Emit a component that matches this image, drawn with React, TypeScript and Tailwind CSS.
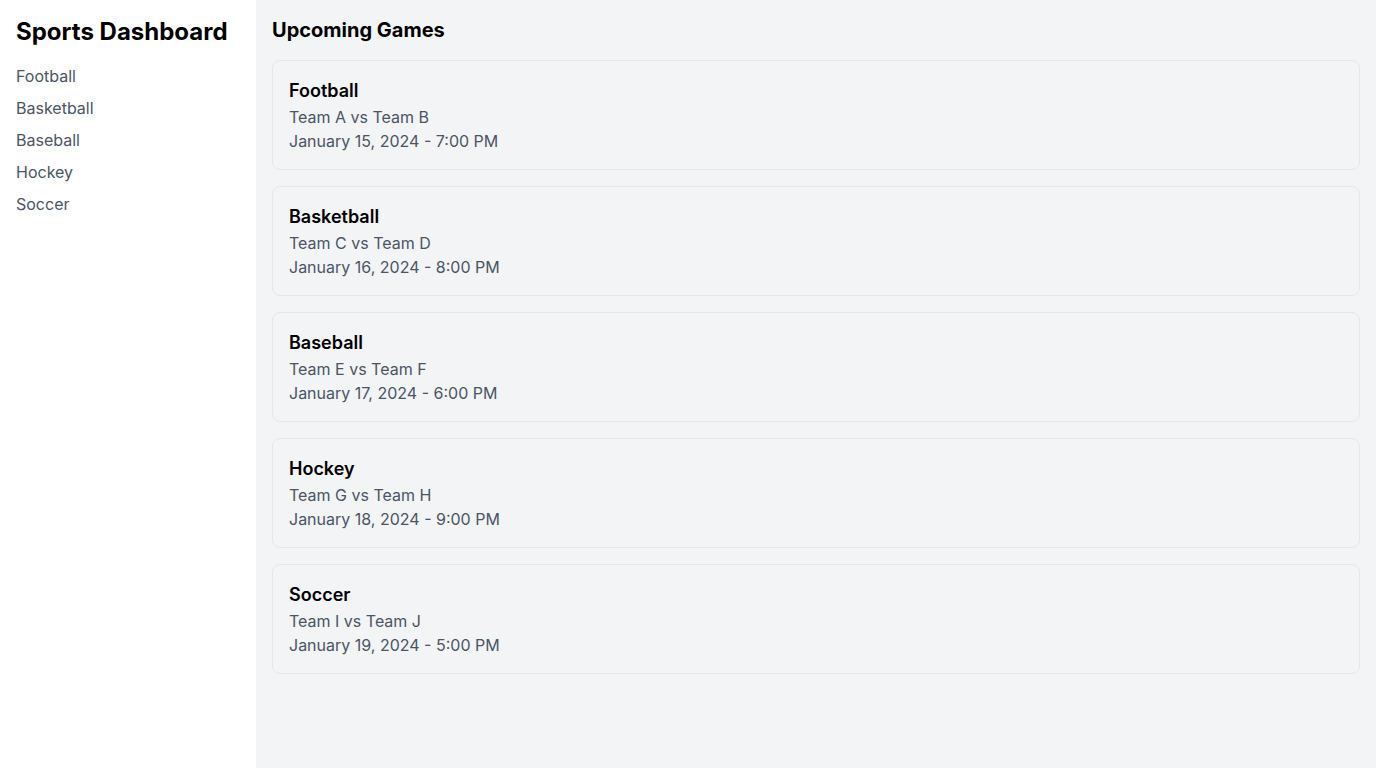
import React from "react";

const sports = ["Football", "Basketball", "Baseball", "Hockey", "Soccer"];
const games = [
  { sport: "Football", teams: "Team A vs Team B", date: "January 15, 2024 - 7:00 PM" },
  { sport: "Basketball", teams: "Team C vs Team D", date: "January 16, 2024 - 8:00 PM" },
  { sport: "Baseball", teams: "Team E vs Team F", date: "January 17, 2024 - 6:00 PM" },
  { sport: "Hockey", teams: "Team G vs Team H", date: "January 18, 2024 - 9:00 PM" },
  { sport: "Soccer", teams: "Team I vs Team J", date: "January 19, 2024 - 5:00 PM" },
];

export default function App() {
  return (
    <div className="flex min-h-screen h-[768px] font-['Inter',sans-serif] text-black">
      <aside className="w-64 shrink-0 bg-white p-4">
        <h1 className="text-2xl font-bold">Sports Dashboard</h1>
        <nav className="mt-4 flex flex-col gap-2">
          {sports.map((s) => (
            <a key={s} className="text-base text-gray-600">{s}</a>
          ))}
        </nav>
      </aside>
      <main className="flex-1 bg-gray-100 p-4">
        <h2 className="mb-4 text-xl font-bold">Upcoming Games</h2>
        <div className="flex flex-col gap-4">
          {games.map((g) => (
            <div key={g.sport} className="rounded-lg border border-gray-200 bg-gray-100 p-4">
              <h3 className="text-lg font-semibold">{g.sport}</h3>
              <p className="text-base text-gray-600">{g.teams}</p>
              <p className="text-base text-gray-600">{g.date}</p>
            </div>
          ))}
        </div>
      </main>
    </div>
  );
}
